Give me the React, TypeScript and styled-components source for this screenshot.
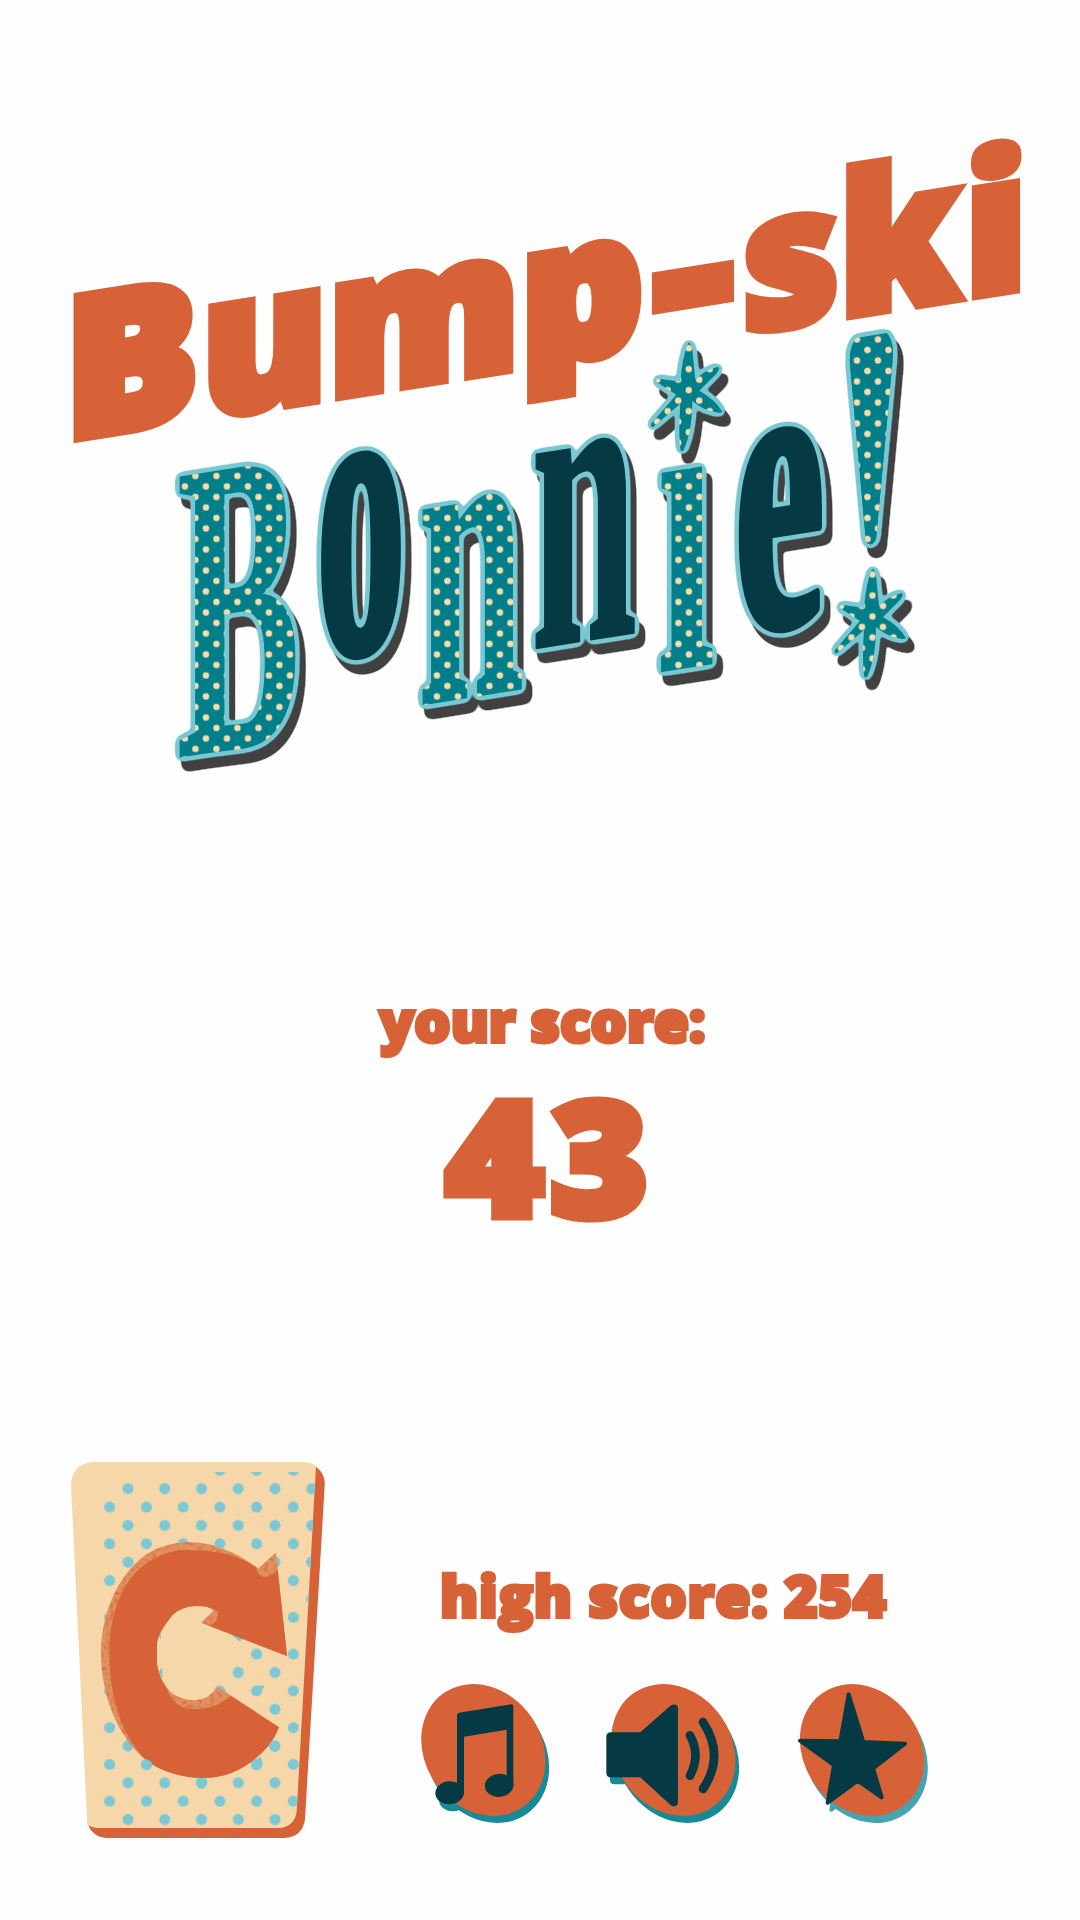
import React from "react";
import styled, { createGlobalStyle } from "styled-components";

const ORANGE = "#d76237";
const DARK = "#053a45";
const TEAL = "#007f8a";
const SKY = "#78c7d2";
const CREAM = "#f5d7a9";

const GlobalStyle = createGlobalStyle`
  body { margin: 0; background: #fefefe; }
  * { box-sizing: border-box; }
`;

const Page = styled.main`
  width: 1080px;
  height: 1920px;
  display: flex;
  flex-direction: column;
  overflow: hidden;
  background: #fefefe;
  color: ${ORANGE};
  font-family: "Open Sans", "Noto Sans", sans-serif;
  font-weight: 800;
`;

const Logo = styled.svg`
  display: block;
  flex: none;
  width: 1080px;
  height: 800px;
`;

const Title = styled.text`
  font-family: "Open Sans", sans-serif;
  font-weight: 800;
  font-size: 192px;
  fill: ${ORANGE};
  stroke: ${ORANGE};
  stroke-linejoin: miter;
`;

const Script = styled.text`
  font-family: "Liberation Serif", serif;
  font-weight: 700;
  stroke-linejoin: round;
`;

const ScorePanel = styled.section`
  flex: none;
  height: 662px;
  padding: 180px 0 0 5px;
  display: flex;
  flex-direction: column;
  align-items: center;
`;

const Caption = styled.div<{ $spacing: number }>`
  font-size: 57px;
  line-height: 80px;
  white-space: nowrap;
  letter-spacing: ${(p) => p.$spacing}px;
  -webkit-text-stroke: 4px ${ORANGE};
`;

const Points = styled.div`
  margin-top: -6px;
  padding-left: 14px;
  font-size: 160px;
  line-height: 200px;
  letter-spacing: 6px;
  transform: scaleX(1.05);
  -webkit-text-stroke: 9px ${ORANGE};
`;

const Footer = styled.footer`
  flex: 1;
  display: flex;
  align-items: flex-start;
  padding-left: 71px;
`;

const Retry = styled.button`
  flex: none;
  padding: 0;
  border: 0;
  background: none;
  width: 254px;
  height: 376px;
  svg { display: block; width: 100%; height: 100%; }
`;

const Side = styled.div`
  margin-left: 96px;
  padding-top: 93px;
  display: flex;
  flex-direction: column;
`;

const HighScore = styled.div`
  padding-left: 19px;
`;

const Buttons = styled.div`
  display: flex;
  gap: 56.7px;
  margin-top: 49px;
`;

const IconButton = styled.button<{ $width: number; $inset?: number }>`
  flex: none;
  padding: 0;
  border: 0;
  background: none;
  margin-left: ${(p) => p.$inset ?? 0}px;
  width: ${(p) => p.$width}px;
  height: 139.4px;
  svg { display: block; width: 100%; height: 100%; overflow: visible; }
`;

const bumpSki = [
  { ch: "B", x: 65, w: 133, bold: 13 },
  { ch: "u", x: 202, w: 125, bold: 12 },
  { ch: "m", x: 329, w: 190, bold: 13 },
  { ch: "p", x: 521, w: 122, bold: 13 },
  { ch: "-", x: 655, w: 76, bold: 13 },
  { ch: "s", x: 742, w: 98, bold: 9 },
  { ch: "k", x: 840, w: 118, bold: 12 },
  { ch: "i", x: 963, w: 66, bold: 9 },
];

const bonnie = [
  { ch: "B", x: 177, y: 330, w: 123, size: 426, fill: "url(#dots)", bold: 2 },
  { ch: "o", x: 317, y: 252, w: 88, size: 409, fill: DARK, bold: 12 },
  { ch: "n", x: 418, y: 316, w: 106, size: 421, fill: "url(#dots)", bold: 2.5 },
  { ch: "n", x: 531, y: 278, w: 106, size: 421, fill: DARK, bold: 2.5 },
  { ch: "i", x: 657, y: 321, w: 58, size: 430, fill: "url(#dots)", bold: 2 },
  { ch: "e", x: 734, y: 294, w: 91, size: 412, fill: DARK, bold: 9 },
  { ch: "!", x: 820, y: 322, w: 102, size: 445, fill: "url(#dots)", bold: 24 },
];

const Sparkle = ({ x, y }: { x: number; y: number }) => (
  <path
    transform={`translate(${x} ${y})`}
    d="M1 -49Q4 -49 5 -42L8 -12Q18 -22 31 -25Q33 -23 29 -18L12 -1Q28 8 35 20Q33 22 27 20Q15 18 5 9Q5 40 -4 59Q-7 60 -7 57Q-9 40 -7 12L-34 35Q-37 36 -36 32L-11 3L-31 -10Q-32 -13 -28 -13L-7 -10Q-5 -35 1 -49Z"
    fill="url(#screenDots)"
  />
);

const BonnieLogo = () => (
  <Logo viewBox="0 0 1080 800" role="img" aria-label="Bump-ski Bonnie!">
    <defs>
      <pattern id="screenDots" width="21" height="21" x="6.7" y="3.7" patternUnits="userSpaceOnUse">
        <rect width="21" height="21" fill={TEAL} />
        <circle cx="5.25" cy="5.25" r="3.2" fill="#fbdcaa" />
        <circle cx="15.75" cy="15.75" r="3.2" fill="#fbdcaa" />
      </pattern>
      <pattern
        id="dots"
        width="21"
        height="21"
        patternUnits="userSpaceOnUse"
        patternTransform="matrix(1 .1584 0 1 0 -454.9) translate(1.2 8.7)"
      >
        <rect width="21" height="21" fill={TEAL} />
        <circle cx="5.25" cy="5.25" r="3.2" fill="#fbdcaa" />
        <circle cx="15.75" cy="15.75" r="3.2" fill="#fbdcaa" />
      </pattern>
      <clipPath id="undotted">
        <path d="M0 -100H645V108H722V-100H832V500H0Z" />
        <path d="M850 44Q848 14 871 13Q894 12 893 44L876 223Q871 231 866 224Z" />
      </clipPath>
      <clipPath id="shortTail">
        <path d="M0 -250H1080V33.300H0Z" />
      </clipPath>
      <filter
        id="marquee"
        filterUnits="userSpaceOnUse"
        x="120"
        y="280"
        width="840"
        height="520"
        colorInterpolationFilters="sRGB"
      >
        <feGaussianBlur in="SourceAlpha" stdDeviation="3.3" result="soft" />
        <feComponentTransfer in="soft" result="outline">
          <feFuncA type="linear" slope="16" intercept="-.7" />
        </feComponentTransfer>
        <feFlood floodColor={SKY} />
        <feComposite in2="outline" operator="in" result="ring" />
        <feOffset in="outline" dx="6" dy="10" result="cast" />
        <feFlood floodColor="#414141" />
        <feComposite in2="cast" operator="in" result="shadow" />
        <feMerge>
          <feMergeNode in="shadow" />
          <feMergeNode in="ring" />
          <feMergeNode in="SourceGraphic" />
        </feMerge>
      </filter>
    </defs>
    <g filter="url(#marquee)">
      <Sparkle x={687.3} y={391.7} />
      <Sparkle x={871} y={618} />
    </g>
    <g filter="url(#marquee)">
      <g transform="matrix(1 -.1584 0 1 0 454.9)">
        <Script clipPath="url(#undotted)">
          {bonnie.map((l, i) => (
            <tspan
              key={i}
              x={l.x}
              y={l.y}
              fontSize={l.size}
              textLength={l.w}
              lengthAdjust="spacingAndGlyphs"
              fill={l.fill}
              stroke={l.fill}
              strokeWidth={l.bold}
            >
              {l.ch}
            </tspan>
          ))}
        </Script>
      </g>
    </g>
    <g transform="matrix(1 -.1584 0 1 0 454.9)">
      <Title clipPath="url(#shortTail)">
        {bumpSki.map((l, i) => (
          <tspan
            key={i}
            x={l.x}
            y={-l.bold / 2}
            textLength={l.w}
            lengthAdjust="spacingAndGlyphs"
            strokeWidth={l.bold}
          >
            {l.ch}
          </tspan>
        ))}
      </Title>
    </g>
  </Logo>
);

const RetryCard = () => (
  <svg viewBox="33 36 762 1128">
    <defs>
      <pattern id="cardDots" x="94" y="62" width="110.2" height="110.3" patternUnits="userSpaceOnUse">
        <circle cx="55" cy="109" r="16.5" fill="#7cc8d5" />
        <circle cx="55" cy="-1.3" r="16.5" fill="#7cc8d5" />
        <circle cx="110" cy="54" r="16.5" fill="#7cc8d5" />
        <circle cx="0" cy="54" r="16.5" fill="#7cc8d5" />
      </pattern>
      <clipPath id="dotArea">
        <path d="M132 90H455V66H768L710 1090Q700 1128 655 1130H132Z" />
      </clipPath>
      <filter id="grain" x="0" y="0" width="1" height="1" colorInterpolationFilters="sRGB">
        <feTurbulence type="fractalNoise" baseFrequency=".08" numOctaves="3" result="n" />
        <feColorMatrix in="n" type="matrix" values="0 0 0 0 .84 0 0 0 0 .39 0 0 0 0 .22 2 0 0 0 -.9" result="s" />
        <feComposite in="s" in2="SourceGraphic" operator="in" result="t" />
        <feMerge>
          <feMergeNode in="SourceGraphic" />
          <feMergeNode in="t" />
        </feMerge>
      </filter>
    </defs>
    <path d="M740 40C775 48 797 70 794 108L735 1108Q728 1160 675 1164H140Q95 1160 82 1118Z" fill={ORANGE} />
    <path d="M98 36H725Q752 36 768 48L710 1085Q704 1128 660 1134H120Q98 1134 82 1124L33 105Q36 42 98 36Z" fill={CREAM} />
    <g clipPath="url(#dotArea)">
      <rect x="94" y="60" width="690" height="1080" fill="url(#cardDots)" />
    </g>
    <path d="M420 470L300 500L310 740L420 760L510 640L560 590L500 545Z" fill={CREAM} />
    <path
      filter="url(#grain)"
      fill="#e0915f"
      d="M648 308L681 618L424 518L463 482C445 468 425 467 405 468Q365 470 340 493Q295 545 291 580V645Q305 700 330 725Q360 750 405 751Q448 748 473 710L657 832Q640 880 588 925Q520 984 430 984Q330 982 260 932C170 860 123 730 123 610C123 470 190 360 260 312Q320 276 390 277Q440 276 490 297Q555 320 592 358Z"
    />
    <path
      fill={ORANGE}
      d="M653 360L681 618L424 518L440 524Q472 518 474 485L463 480C445 468 425 467 405 468Q365 470 340 493Q295 545 291 580V645Q298 685 318 710Q340 774 395 777Q465 780 512 738L657 832Q645 862 628 885Q540 984 430 984Q330 982 260 932C180 855 148 730 148 610C148 500 180 420 225 370Q280 312 360 300Q430 298 490 310Q550 325 590 352Q592 380 615 381Q632 378 653 360Z"
    />
    <path d="M424 518L463 480Q478 490 469 511Q460 528 445 524Z" fill="#e0915f" filter="url(#grain)" />
    <g fill="#7cc8d5">
      <circle cx="644" cy="888" r="16.5" />
      <path d="M574 937Q590 935 600 919Q614 940 601 956Q586 967 575 953Z" />
      <path d="M245 937L259 927L275 936Q279 955 262 961Q245 960 245 937Z" />
      <path d="M410 986H440Q446 1010 425 1016Q405 1012 410 986Z" />
      <path d="M595 708L612 706Q610 720 603 728Z" />
    </g>
  </svg>
);

const Disc = ({ cx }: { cx: number }) => (
  <ellipse rx="208" ry="175" transform={`translate(${cx} 239) rotate(55.2)`} />
);

const Badge = ({ x, w, cx, shade, children }: { x: number; w: number; cx: number; shade: string; children: React.ReactNode }) => (
  <svg viewBox={`${x} 41 ${w} 418`}>
    <g transform="translate(11 21)" fill={shade} stroke={shade}>
      <g stroke="none"><Disc cx={cx} /></g>
      {children}
    </g>
    <g fill={ORANGE}><Disc cx={cx} /></g>
    <g fill={DARK} stroke={DARK}>{children}</g>
  </svg>
);

export default function App() {
  return (
    <Page>
      <GlobalStyle />
      <BonnieLogo />
      <ScorePanel>
        <Caption $spacing={0}>your score:</Caption>
        <Points>43</Points>
      </ScorePanel>
      <Footer>
        <Retry aria-label="Play again"><RetryCard /></Retry>
        <Side>
          <HighScore><Caption $spacing={0.85}>high score: 254</Caption></HighScore>
          <Buttons>
            <IconButton $width={128} aria-label="Music">
              <Badge x={33} w={384} cx={220} shade="#168a96">
                <g stroke="none">
                  <path d="M141 134Q141 129 147 127L302 102Q310 101 310 109V346H290V178L162 199V370H141Z" />
                  <ellipse cx="119" cy="367" rx="43" ry="34.5" transform="rotate(-5 119 367)" />
                  <ellipse cx="267.5" cy="345" rx="43" ry="34.5" transform="rotate(-5 267.5 345)" />
                </g>
              </Badge>
            </IconButton>
            <IconButton $width={133.3} aria-label="Sound">
              <Badge x={47} w={400} cx={249} shade="#168a96">
                <path stroke="none" d="M62 186H150L241 105Q262 97 263 115V395Q261 413 243 406L150 321H62Q48 321 48 307V200Q48 186 62 186Z" />
                <path fill="none" strokeWidth="26" strokeLinecap="round" d="M299 195Q332 254 299 316M338 155Q405 256 338 356" />
              </Badge>
            </IconButton>
            <IconButton $width={129.7} $inset={2.6} aria-label="Achievements">
              <Badge x={625} w={389} cx={817} shade="#48a3b1">
                <path strokeWidth="12" strokeLinejoin="round" d="M777 72L821 215L946 220L850 294L876 381L804 331L714 397L733 284L631 211L752 213Z" />
              </Badge>
            </IconButton>
          </Buttons>
        </Side>
      </Footer>
    </Page>
  );
}
